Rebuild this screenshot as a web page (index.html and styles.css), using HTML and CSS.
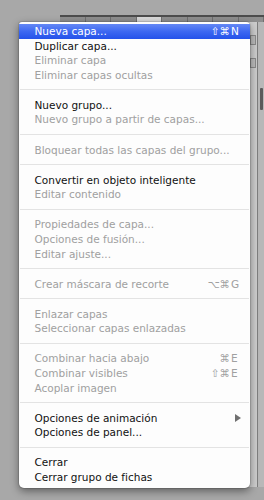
FILE: index.html
```html
<!DOCTYPE html>
<html lang="es">
<head>
    <meta charset="UTF-8">
    <meta name="viewport" content="width=device-width, initial-scale=1.0">
    <title>Capas - menú del panel</title>
    <link rel="stylesheet" href="styles.css">
</head>
<body>

<!-- panel de capas detrás del menú -->
<div class="panel">
    <div class="panel-tabs">
        <span></span><span></span><span></span><span class="on"></span><span></span><span></span><span></span><span></span>
    </div>
    <div class="panel-body">
        <div class="panel-main">
            <div class="layer-row"><i></i></div>
            <div class="layer-row"><i></i></div>
        </div>
        <div class="panel-side"><div class="thumb"></div></div>
    </div>
</div>

<div class="menu">
    <div class="item hl"><span>Nueva capa...</span><span class="key"><span class="mods">⇧⌘</span><span class="letter">N</span></span></div>
    <div class="item">Duplicar capa...</div>
    <div class="item off">Eliminar capa</div>
    <div class="item off">Eliminar capas ocultas</div>
    <div class="sep"></div>
    <div class="item">Nuevo grupo...</div>
    <div class="item off">Nuevo grupo a partir de capas...</div>
    <div class="sep"></div>
    <div class="item off">Bloquear todas las capas del grupo...</div>
    <div class="sep"></div>
    <div class="item">Convertir en objeto inteligente</div>
    <div class="item off">Editar contenido</div>
    <div class="sep"></div>
    <div class="item off">Propiedades de capa...</div>
    <div class="item off">Opciones de fusión...</div>
    <div class="item off">Editar ajuste...</div>
    <div class="sep"></div>
    <div class="item off"><span>Crear máscara de recorte</span><span class="key"><span class="mods">⌥⌘</span><span class="letter">G</span></span></div>
    <div class="sep"></div>
    <div class="item off">Enlazar capas</div>
    <div class="item off">Seleccionar capas enlazadas</div>
    <div class="sep"></div>
    <div class="item off"><span>Combinar hacia abajo</span><span class="key"><span class="mods">⌘</span><span class="letter">E</span></span></div>
    <div class="item off"><span>Combinar visibles</span><span class="key"><span class="mods">⇧⌘</span><span class="letter">E</span></span></div>
    <div class="item off">Acoplar imagen</div>
    <div class="sep"></div>
    <div class="item"><span>Opciones de animación</span>
        <svg class="arrow" width="6" height="8" viewBox="0 0 6 8"><polygon points="0,0 6,4 0,8" /></svg>
    </div>
    <div class="item">Opciones de panel...</div>
    <div class="sep"></div>
    <div class="item">Cerrar</div>
    <div class="item">Cerrar grupo de fichas</div>
</div>

</body>
</html>
```

FILE: styles.css
```css
:root {
    --desk: #a8a8a8;
    --menu-bg: #fdfdfd;
    --text: #111;
    --text-off: #a0a0a0;
    --sep: #e3e3e3;
    --row-h: 14.6px;
}

* {
    box-sizing: border-box;
}

body {
    margin: 0;
    width: 264px;
    height: 500px;
    overflow: hidden;
    position: relative;
    background-color: var(--desk);
    font-family: 'DejaVu Sans', 'Liberation Sans', sans-serif;
}

/* panel de fondo */
.panel {
    margin: 15px 0 0 60px;
    height: 472px;
    display: flex;
    flex-direction: column;
    border-top: 2px solid #4c4c4c;
}

.panel-tabs {
    display: flex;
    height: 5px;
    background-color: #8e8e8e;
}

.panel-tabs span {
    flex: 1;
    border-right: 1px solid #6f6f6f;
}

.panel-tabs span.on {
    background-color: #d9d9d9;
}

.panel-body {
    flex: 1;
    display: flex;
}

.panel-main {
    flex: 1;
    background-color: #cdcdcd;
    padding-top: 13px;
}

.layer-row {
    height: 23px;
    display: flex;
    justify-content: flex-end;
    padding-right: 1px;
}

.layer-row i {
    width: 6px;
    height: 10px;
    border: 1px solid #8a8a8a;
    background-color: #bcbcbc;
}

.panel-side {
    width: 7px;
    background-color: #b8b8b8;
    border-left: 1px solid #7e7e7e;
    padding: 66px 1px 0 2px;
}

.thumb {
    height: 22px;
    background-color: #5a5a5a;
    border-radius: 1px;
}

/* menú emergente */
.menu {
    position: absolute;
    left: 19px;
    top: 22px;
    width: 231px;
    padding: 2px 0 3px;
    background-color: var(--menu-bg);
    border-radius: 3px 4px 5px 5px;
    box-shadow: 0 3px 9px rgba(0, 0, 0, 0.45), 0 0 0 1px rgba(0, 0, 0, 0.1);
    font-size: 10.5px;
    color: var(--text);
}

.item {
    display: flex;
    align-items: center;
    height: var(--row-h);
    line-height: var(--row-h);
    padding: 0 10px 0 15.5px;
    white-space: nowrap;
}

.item.off {
    color: var(--text-off);
}

.item.hl {
    background: linear-gradient(to bottom, #6488f5 0%, #3d68f1 50%, #2452ea 100%);
    color: #fff;
}

.key {
    margin-left: auto;
    display: flex;
}

.key .mods {
    text-align: right;
}

.key .letter {
    width: 10px;
    text-align: left;
    padding-left: 1px;
}

.arrow {
    margin-left: auto;
    margin-right: -1px;
    fill: #707070;
}

.sep {
    height: 1px;
    margin: 7px 1px 7.5px;
    background-color: var(--sep);
}
```
